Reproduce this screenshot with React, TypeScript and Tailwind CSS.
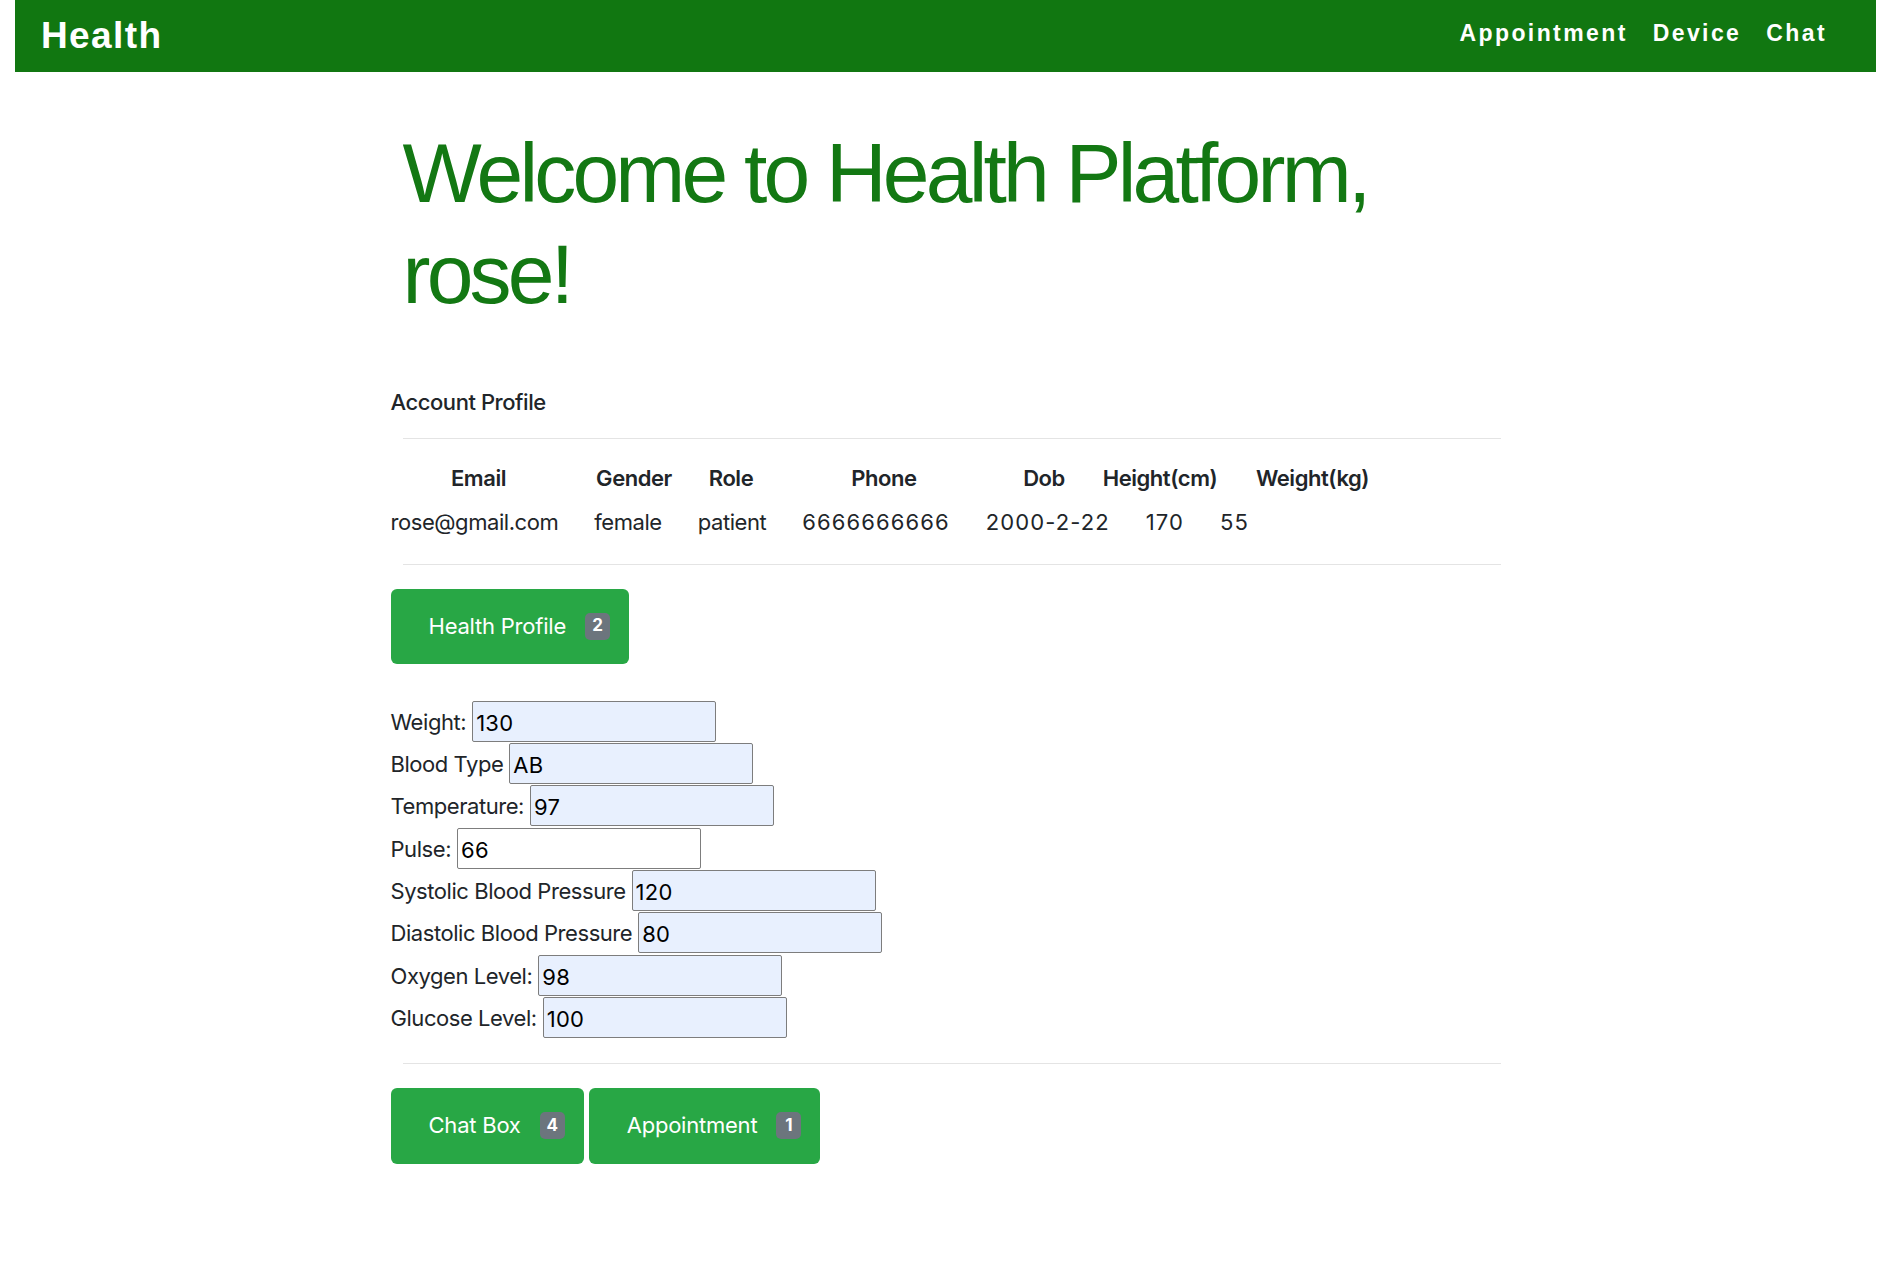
import type { ReactNode } from "react";

interface IVital {
    label: string;
    value: string;
    filled: boolean;
}

const vitals: IVital[] = [
    { label: "Weight:", value: "130", filled: true },
    { label: "Blood Type", value: "AB", filled: true },
    { label: "Temperature:", value: "97", filled: true },
    { label: "Pulse:", value: "66", filled: false },
    { label: "Systolic Blood Pressure", value: "120", filled: true },
    { label: "Diastolic Blood Pressure", value: "80", filled: true },
    { label: "Oxygen Level:", value: "98", filled: true },
    { label: "Glucose Level:", value: "100", filled: true },
];

const headers = [
    { name: "Email", width: "w-[176px]" },
    { name: "Gender", width: "w-[135px]" },
    { name: "Role", width: "w-[59px]" },
    { name: "Phone", width: "w-[247px]" },
    { name: "Dob", width: "w-[73px]" },
    { name: "Height(cm)", width: "w-[159px]" },
    { name: "Weight(kg)", width: "w-[146px]" },
];

const values = [
    { text: "rose@gmail.com", numeric: false },
    { text: "female", numeric: false },
    { text: "patient", numeric: false },
    { text: "6666666666", numeric: true },
    { text: "2000-2-22", numeric: true },
    { text: "170", numeric: true },
    { text: "55", numeric: true },
];

const Divider = ({ className }: { className?: string }) => (
    <div className={`ml-[12px] border-t border-[#e4e4e4] ${className ?? ""}`} />
);

const BadgeButton = ({ children, count, tall }: { children: ReactNode; count: number; tall?: boolean }) => (
    <button
        className={`flex items-center rounded-[6px] bg-[#28a745] pl-[38px] pr-[19px] text-[22px] text-white tracking-[-0.01em] ${
            tall ? "h-[76px]" : "h-[75px]"
        }`}
    >
        {children}
        <span className="ml-[19px] flex h-[27px] w-[25px] items-center justify-center rounded-[5px] bg-[#6c757d] text-[17px] font-bold tracking-normal">
            {count}
        </span>
    </button>
);

const App = () => {
    return (
        <div className="min-h-screen bg-white font-['Inter','Liberation_Sans',sans-serif] text-[#212529]">
            {/* Navbar */}
            <nav className="mx-[15px] flex h-[72px] items-center justify-between bg-[#117711] pl-[26px] pr-[49px] font-['Liberation_Sans',sans-serif] text-white">
                <span className="text-[37px] font-bold tracking-[1.4px]">Health</span>
                <div className="flex gap-[25px] pb-[5px] text-[23px] font-bold tracking-[2.4px]">
                    <span>Appointment</span>
                    <span>Device</span>
                    <span>Chat</span>
                </div>
            </nav>

            <main className="mx-auto w-[1110px]">
                {/* Welcome */}
                <h1 className="ml-[12px] mt-[51px] font-['Liberation_Sans',sans-serif] text-[84px] font-normal leading-[1.2] tracking-[-3.8px] text-[#137813]">
                    Welcome to Health Platform, rose!
                </h1>

                {/* Account profile */}
                <h5 className="mt-[64px] text-[22px] font-medium leading-[26px] tracking-[-0.02em]">Account Profile</h5>
                <Divider className="mt-[23px]" />

                <div className="mt-[23px] flex text-[22px] font-semibold leading-[33px] tracking-[-0.02em]">
                    {headers.map((h) => (
                        <div key={h.name} className={`${h.width} shrink-0 text-center`}>
                            {h.name}
                        </div>
                    ))}
                </div>
                <div className="mt-[11px] flex gap-[36px] text-[22px] leading-[33px]">
                    {values.map((v) => (
                        <span key={v.text} className={v.numeric ? "tracking-[0.05em]" : "tracking-[-0.02em]"}>
                            {v.text}
                        </span>
                    ))}
                </div>
                <Divider className="mt-[25px]" />

                {/* Health profile */}
                <div className="mt-[24px] flex">
                    <BadgeButton count={2}>Health Profile</BadgeButton>
                </div>

                <div className="mt-[37px] flex flex-col gap-px">
                    {vitals.map((v) => (
                        <div key={v.label} className="flex h-[41.3px] items-center pt-[2px] text-[22px] tracking-[-0.02em]">
                            <span>{v.label}</span>
                            <input
                                readOnly
                                value={v.value}
                                className={`ml-[6px] -mt-[2px] h-[41px] w-[244px] rounded-[2px] border border-[#7d7d7d] px-[3px] pt-[3px] text-[22px] tracking-[0.01em] text-black outline-none ${
                                    v.filled ? "bg-[#e8f0fe]" : "bg-white"
                                }`}
                            />
                        </div>
                    ))}
                </div>

                <Divider className="mt-[25px]" />

                {/* Actions */}
                <div className="mt-[24px] flex gap-[5px]">
                    <BadgeButton count={4} tall>
                        Chat Box
                    </BadgeButton>
                    <BadgeButton count={1} tall>
                        Appointment
                    </BadgeButton>
                </div>
            </main>
        </div>
    );
};

export default App;
